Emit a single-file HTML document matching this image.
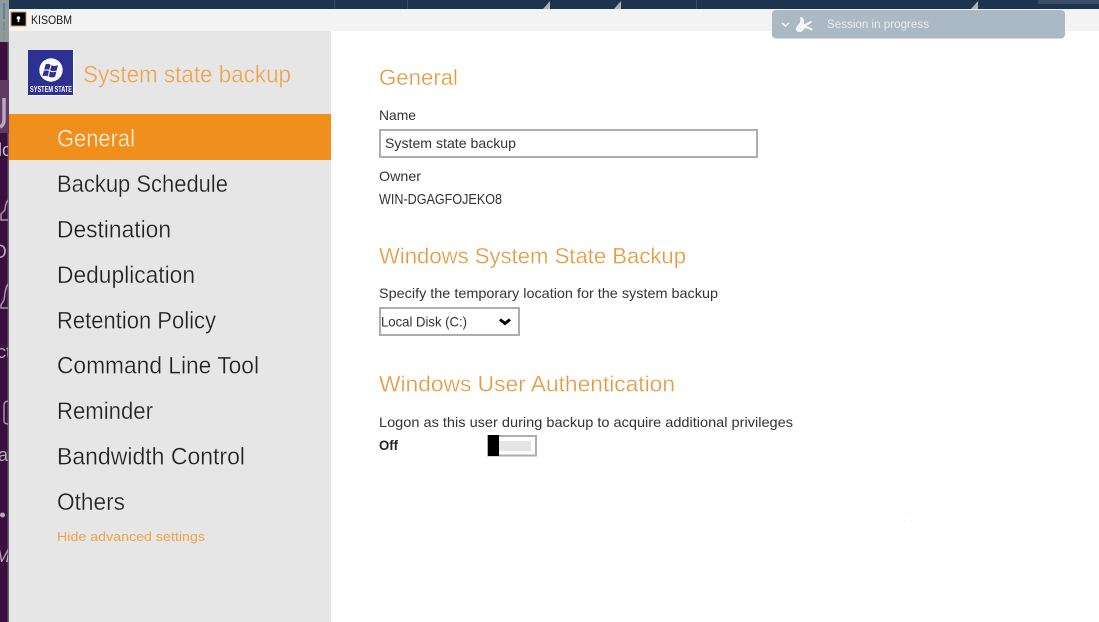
<!DOCTYPE html>
<html><head><meta charset="utf-8"><style>
html,body{margin:0;padding:0;width:1099px;height:622px;overflow:hidden;background:#fff}
svg{display:block}
text{font-family:"Liberation Sans",sans-serif}
</style></head><body>
<svg width="1099" height="622" viewBox="0 0 1099 622" xmlns="http://www.w3.org/2000/svg">
<defs><clipPath id="strip"><rect x="0" y="42" width="8" height="580"/></clipPath></defs>
<rect width="1099" height="622" fill="#fff"/>
<rect width="1099" height="9" fill="#1c3450"/>
<rect x="0" y="0" width="9" height="622" fill="#3a0e3f"/>
<rect x="7.500" y="42" width="1.500" height="580" fill="#6a5a70"/>
<rect x="0" y="0" width="9" height="42" fill="#8f9aa0"/>
<rect x="3" y="3" width="2" height="16" fill="#5f83a0"/>
<rect x="3" y="22" width="2" height="8" fill="#6f9478"/>
<rect x="3" y="32" width="2" height="7" fill="#8f9a60"/>
<rect x="0" y="80" width="9" height="53" fill="#5f3b64"/>
<g clip-path="url(#strip)">
<path d="M4 98v22c0 4-2 6-4 7" fill="none" stroke="#b9a9bb" stroke-width="3.500"/>
<text x="-2" y="156" font-size="18" fill="#c9bccb">lo</text>
<path d="M8 200c-3 4-3 8-3 10l-4 4v6h8" fill="none" stroke="#a794aa" stroke-width="1.500"/>
<text x="-8" y="258" font-size="19" fill="#b9a9bb">O</text>
<path d="M8 284c-3 4-3 10-4 16l-3 5v3h8" fill="none" stroke="#a794aa" stroke-width="1.500"/>
<text x="-3" y="358" font-size="18" fill="#b9a9bb">ct</text>
<path d="M9 401c-3 0-5 1-5 4v16c0 2 2 3 5 3" fill="none" stroke="#a794aa" stroke-width="1.500"/>
<text x="-2" y="461" font-size="18" fill="#b9a9bb">a</text>
<circle cx="2.500" cy="515" r="2.500" fill="#b9a9bb"/>
<text x="-5" y="562" font-size="18" font-style="italic" fill="#b9a9bb">M</text>
</g>
<rect x="9" y="9" width="1090" height="22" fill="#f3f3f3"/>
<rect x="9" y="31" width="322" height="591" fill="#e6e6e6"/>
<rect x="334" y="0" width="1" height="9" fill="#3a4e66"/>
<rect x="407" y="0" width="1" height="9" fill="#3a4e66"/>
<rect x="696" y="0" width="1" height="9" fill="#3a4e66"/>
<polygon points="543,9 550,9 550,1" fill="#a9b4bd"/>
<polygon points="614,9 621,9 621,1" fill="#a9b4bd"/>
<polygon points="971,9 978,9 978,1" fill="#a9b4bd"/>
<rect x="1038" y="0" width="61" height="4" fill="#3a4e66"/>

<rect x="11" y="12" width="15" height="14" fill="#000" stroke="#d99a45" stroke-width="1"/>
<circle cx="18.500" cy="18" r="1.800" fill="#fff"/><rect x="17.700" y="18" width="1.600" height="4" fill="#fff"/>
<text x="31" y="24" font-size="11.500" fill="#1a1a1a" textLength="41" lengthAdjust="spacingAndGlyphs">KISOBM</text>

<rect x="772" y="10" width="293" height="28.500" rx="4" fill="#abb9c4"/>
<path d="M782 23l3.500 3 3.500-3" fill="none" stroke="#eef2f4" stroke-width="1.500"/>
<path d="M800 17c2.500 0 4 1.500 4 4 0 1.200-.3 2.200-.2 3 2-.2 5-1.800 7-3.300l1.200 1.300c-1.800 1.800-4 3-6 3.600 2.500.6 5 2 6.800 3.800l-1 1.300c-2.500-1.500-5-2.400-7.300-2.600-.8 2.300-2.800 3.900-5.200 3.900-2 0-3.300-1.200-3.300-3.100 0-2.700 2.500-4 3.800-6.300.8-1.500.8-3.200.2-5.600z" fill="#f4f6f7"/>
<text x="827" y="28" font-size="11.500" fill="#e8edf0" textLength="102" lengthAdjust="spacingAndGlyphs">Session in progress</text>

<rect x="28" y="50" width="46" height="46" fill="#fff"/>
<rect x="28" y="50" width="45" height="45" fill="#2d3192"/>
<circle cx="51" cy="70" r="11.700" fill="#fff"/>
<g fill="#2d3192">
<path d="M45.500 64.500c1.800-.8 3.500-.8 5 .2l-1.300 5.300c-1.600-.8-3.200-.8-5 0z"/>
<path d="M51.500 65.100c1.800 1 3.800 1 6.500 0l-1.300 5.300c-2 1-4.500 1-6.500-.2z"/>
<path d="M43.800 71c1.700-.8 3.300-.8 5.200 0l-1.300 5.300c-1.700-.8-3.400-.8-5.200 0z"/>
<path d="M50 71.400c1.900 1.100 4 1.100 6.400 0l-1.300 5.300c-2 1-4.200 1-6.400-.2z"/>
</g>
<text x="30" y="92" font-size="8" font-weight="bold" fill="#fff" textLength="42" lengthAdjust="spacingAndGlyphs">SYSTEM STATE</text>
<text x="83" y="82.500" font-size="24" fill="#f0a44a" stroke="#e6e6e6" stroke-width=".35" textLength="208" lengthAdjust="spacingAndGlyphs">System state backup</text>

<rect x="9" y="114" width="322" height="46" fill="#f18f1c"/>
<g font-size="24" fill="#222" stroke="#e6e6e6" stroke-width=".3">
<text x="57" y="146.500" fill="#fbeede" stroke="#f18f1c" textLength="78" lengthAdjust="spacingAndGlyphs">General</text>
<text x="57" y="192" textLength="171" lengthAdjust="spacingAndGlyphs">Backup Schedule</text>
<text x="57" y="237.500" textLength="114" lengthAdjust="spacingAndGlyphs">Destination</text>
<text x="57" y="283" textLength="138" lengthAdjust="spacingAndGlyphs">Deduplication</text>
<text x="57" y="328.500" textLength="159" lengthAdjust="spacingAndGlyphs">Retention Policy</text>
<text x="57" y="373.500" textLength="202" lengthAdjust="spacingAndGlyphs">Command Line Tool</text>
<text x="57" y="419" textLength="96" lengthAdjust="spacingAndGlyphs">Reminder</text>
<text x="57" y="464.500" textLength="188" lengthAdjust="spacingAndGlyphs">Bandwidth Control</text>
<text x="57" y="510" textLength="68" lengthAdjust="spacingAndGlyphs">Others</text>
</g>
<text x="57" y="541" font-size="13" fill="#f0a44a" textLength="148" lengthAdjust="spacingAndGlyphs">Hide advanced settings</text>

<g stroke="#fff" stroke-width=".3" font-size="22" fill="#e59a41">
<text x="379" y="85" textLength="79" lengthAdjust="spacingAndGlyphs">General</text>
<text x="379" y="263.500" textLength="307" lengthAdjust="spacingAndGlyphs">Windows System State Backup</text>
<text x="379" y="391.500" textLength="296" lengthAdjust="spacingAndGlyphs">Windows User Authentication</text>
</g>
<text x="379" y="120" font-size="14" fill="#333" textLength="37" lengthAdjust="spacingAndGlyphs">Name</text>
<rect x="380" y="130" width="377" height="27" fill="#fff" stroke="#aeaeae" stroke-width="2"/>
<text x="385" y="148" font-size="14" fill="#333" textLength="131" lengthAdjust="spacingAndGlyphs">System state backup</text>
<text x="379" y="181" font-size="14" fill="#333" textLength="42" lengthAdjust="spacingAndGlyphs">Owner</text>
<text x="379" y="204" font-size="14.500" fill="#333" textLength="123" lengthAdjust="spacingAndGlyphs">WIN-DGAGFOJEKO8</text>

<text x="379" y="298" font-size="14" fill="#333" textLength="339" lengthAdjust="spacingAndGlyphs">Specify the temporary location for the system backup</text>
<rect x="380" y="308" width="139" height="27" fill="#fff" stroke="#aeaeae" stroke-width="2"/>
<text x="381" y="326.500" font-size="14" fill="#333" textLength="86" lengthAdjust="spacingAndGlyphs">Local Disk (C:)</text>
<path d="M500 319.500l5 4 5-4" fill="none" stroke="#000" stroke-width="3"/>

<text x="379" y="427" font-size="14" fill="#333" textLength="414" lengthAdjust="spacingAndGlyphs">Logon as this user during backup to acquire additional privileges</text>
<text x="379" y="450" font-size="14" font-weight="bold" fill="#222" textLength="19" lengthAdjust="spacingAndGlyphs">Off</text>
<rect x="488" y="436" width="48" height="19.500" fill="#fff" stroke="#aeaeae" stroke-width="2"/>
<rect x="498" y="441" width="33" height="10" fill="#e4e4e4"/>
<rect x="488" y="435" width="11" height="21" fill="#000"/>
<g fill="#eee"><rect x="904" y="513" width="1" height="1"/><rect x="911" y="513" width="1" height="1"/><rect x="904" y="520" width="1" height="1"/><rect x="911" y="520" width="1" height="1"/></g>
</svg>
</body></html>
